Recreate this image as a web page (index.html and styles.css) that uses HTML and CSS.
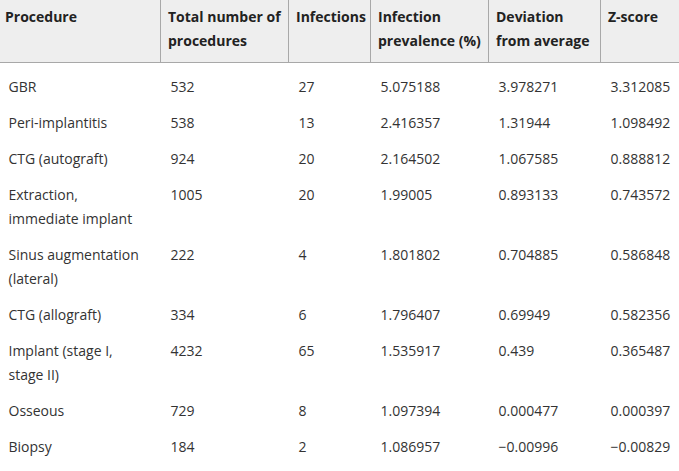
FILE: index.html
```html
<!DOCTYPE html>
<html lang="en">
<head>
<meta charset="utf-8">
<title>Infection prevalence by procedure</title>
<link rel="stylesheet" href="styles.css">
</head>
<body>
<table class="data-table">
  <colgroup>
    <col class="c1"><col class="c2"><col class="c3"><col class="c4"><col class="c5"><col class="c6">
  </colgroup>
  <thead>
    <tr>
      <th>Procedure</th>
      <th>Total number of procedures</th>
      <th>Infections</th>
      <th>Infection prevalence (%)</th>
      <th>Deviation from average</th>
      <th>Z-score</th>
    </tr>
  </thead>
  <tbody>
    <tr><td>GBR</td><td>532</td><td>27</td><td>5.075188</td><td>3.978271</td><td>3.312085</td></tr>
    <tr><td>Peri-implantitis</td><td>538</td><td>13</td><td>2.416357</td><td>1.31944</td><td>1.098492</td></tr>
    <tr><td>CTG (autograft)</td><td>924</td><td>20</td><td>2.164502</td><td>1.067585</td><td>0.888812</td></tr>
    <tr><td>Extraction, immediate implant</td><td>1005</td><td>20</td><td>1.99005</td><td>0.893133</td><td>0.743572</td></tr>
    <tr><td>Sinus augmentation (lateral)</td><td>222</td><td>4</td><td>1.801802</td><td>0.704885</td><td>0.586848</td></tr>
    <tr><td>CTG (allograft)</td><td>334</td><td>6</td><td>1.796407</td><td>0.69949</td><td>0.582356</td></tr>
    <tr><td>Implant (stage I, stage II)</td><td>4232</td><td>65</td><td>1.535917</td><td>0.439</td><td>0.365487</td></tr>
    <tr><td>Osseous</td><td>729</td><td>8</td><td>1.097394</td><td>0.000477</td><td>0.000397</td></tr>
    <tr><td>Biopsy</td><td>184</td><td>2</td><td>1.086957</td><td>&minus;0.00996</td><td>&minus;0.00829</td></tr>
  </tbody>
</table>
</body>
</html>
```
FILE: styles.css
```css
html, body {
  margin: 0;
  padding: 0;
  background: #ffffff;
}
body {
  font-family: "Open Sans", "Liberation Sans", sans-serif;
  font-size: 14px;
  color: #333333;
}
.data-table {
  width: 679px;
  table-layout: fixed;
  border-collapse: separate;
  border-spacing: 0;
}
.c1 { width: 160px; }
.c2 { width: 128px; }
.c3 { width: 82px; }
.c4 { width: 118px; }
.c5 { width: 112px; }
.c6 { width: 79px; }

.data-table th {
  background: #eeeeee;
  color: #222222;
  font-weight: 700;
  text-align: left;
  vertical-align: top;
  line-height: 24px;
  padding: 5px 4px 9px 7px;
  border-bottom: 1px solid #a8a8a8;
}
.data-table th + th {
  border-left: 1px solid #a8a8a8;
}
.data-table th:first-child {
  padding-left: 5px;
}
.data-table td {
  text-align: left;
  vertical-align: top;
  line-height: 24px;
  padding: 6px 11px 6px 10.5px;
}
.data-table td:first-child {
  padding-left: 8.5px;
}
.data-table tbody tr:first-child td {
  padding-top: 11.5px;
}
```
